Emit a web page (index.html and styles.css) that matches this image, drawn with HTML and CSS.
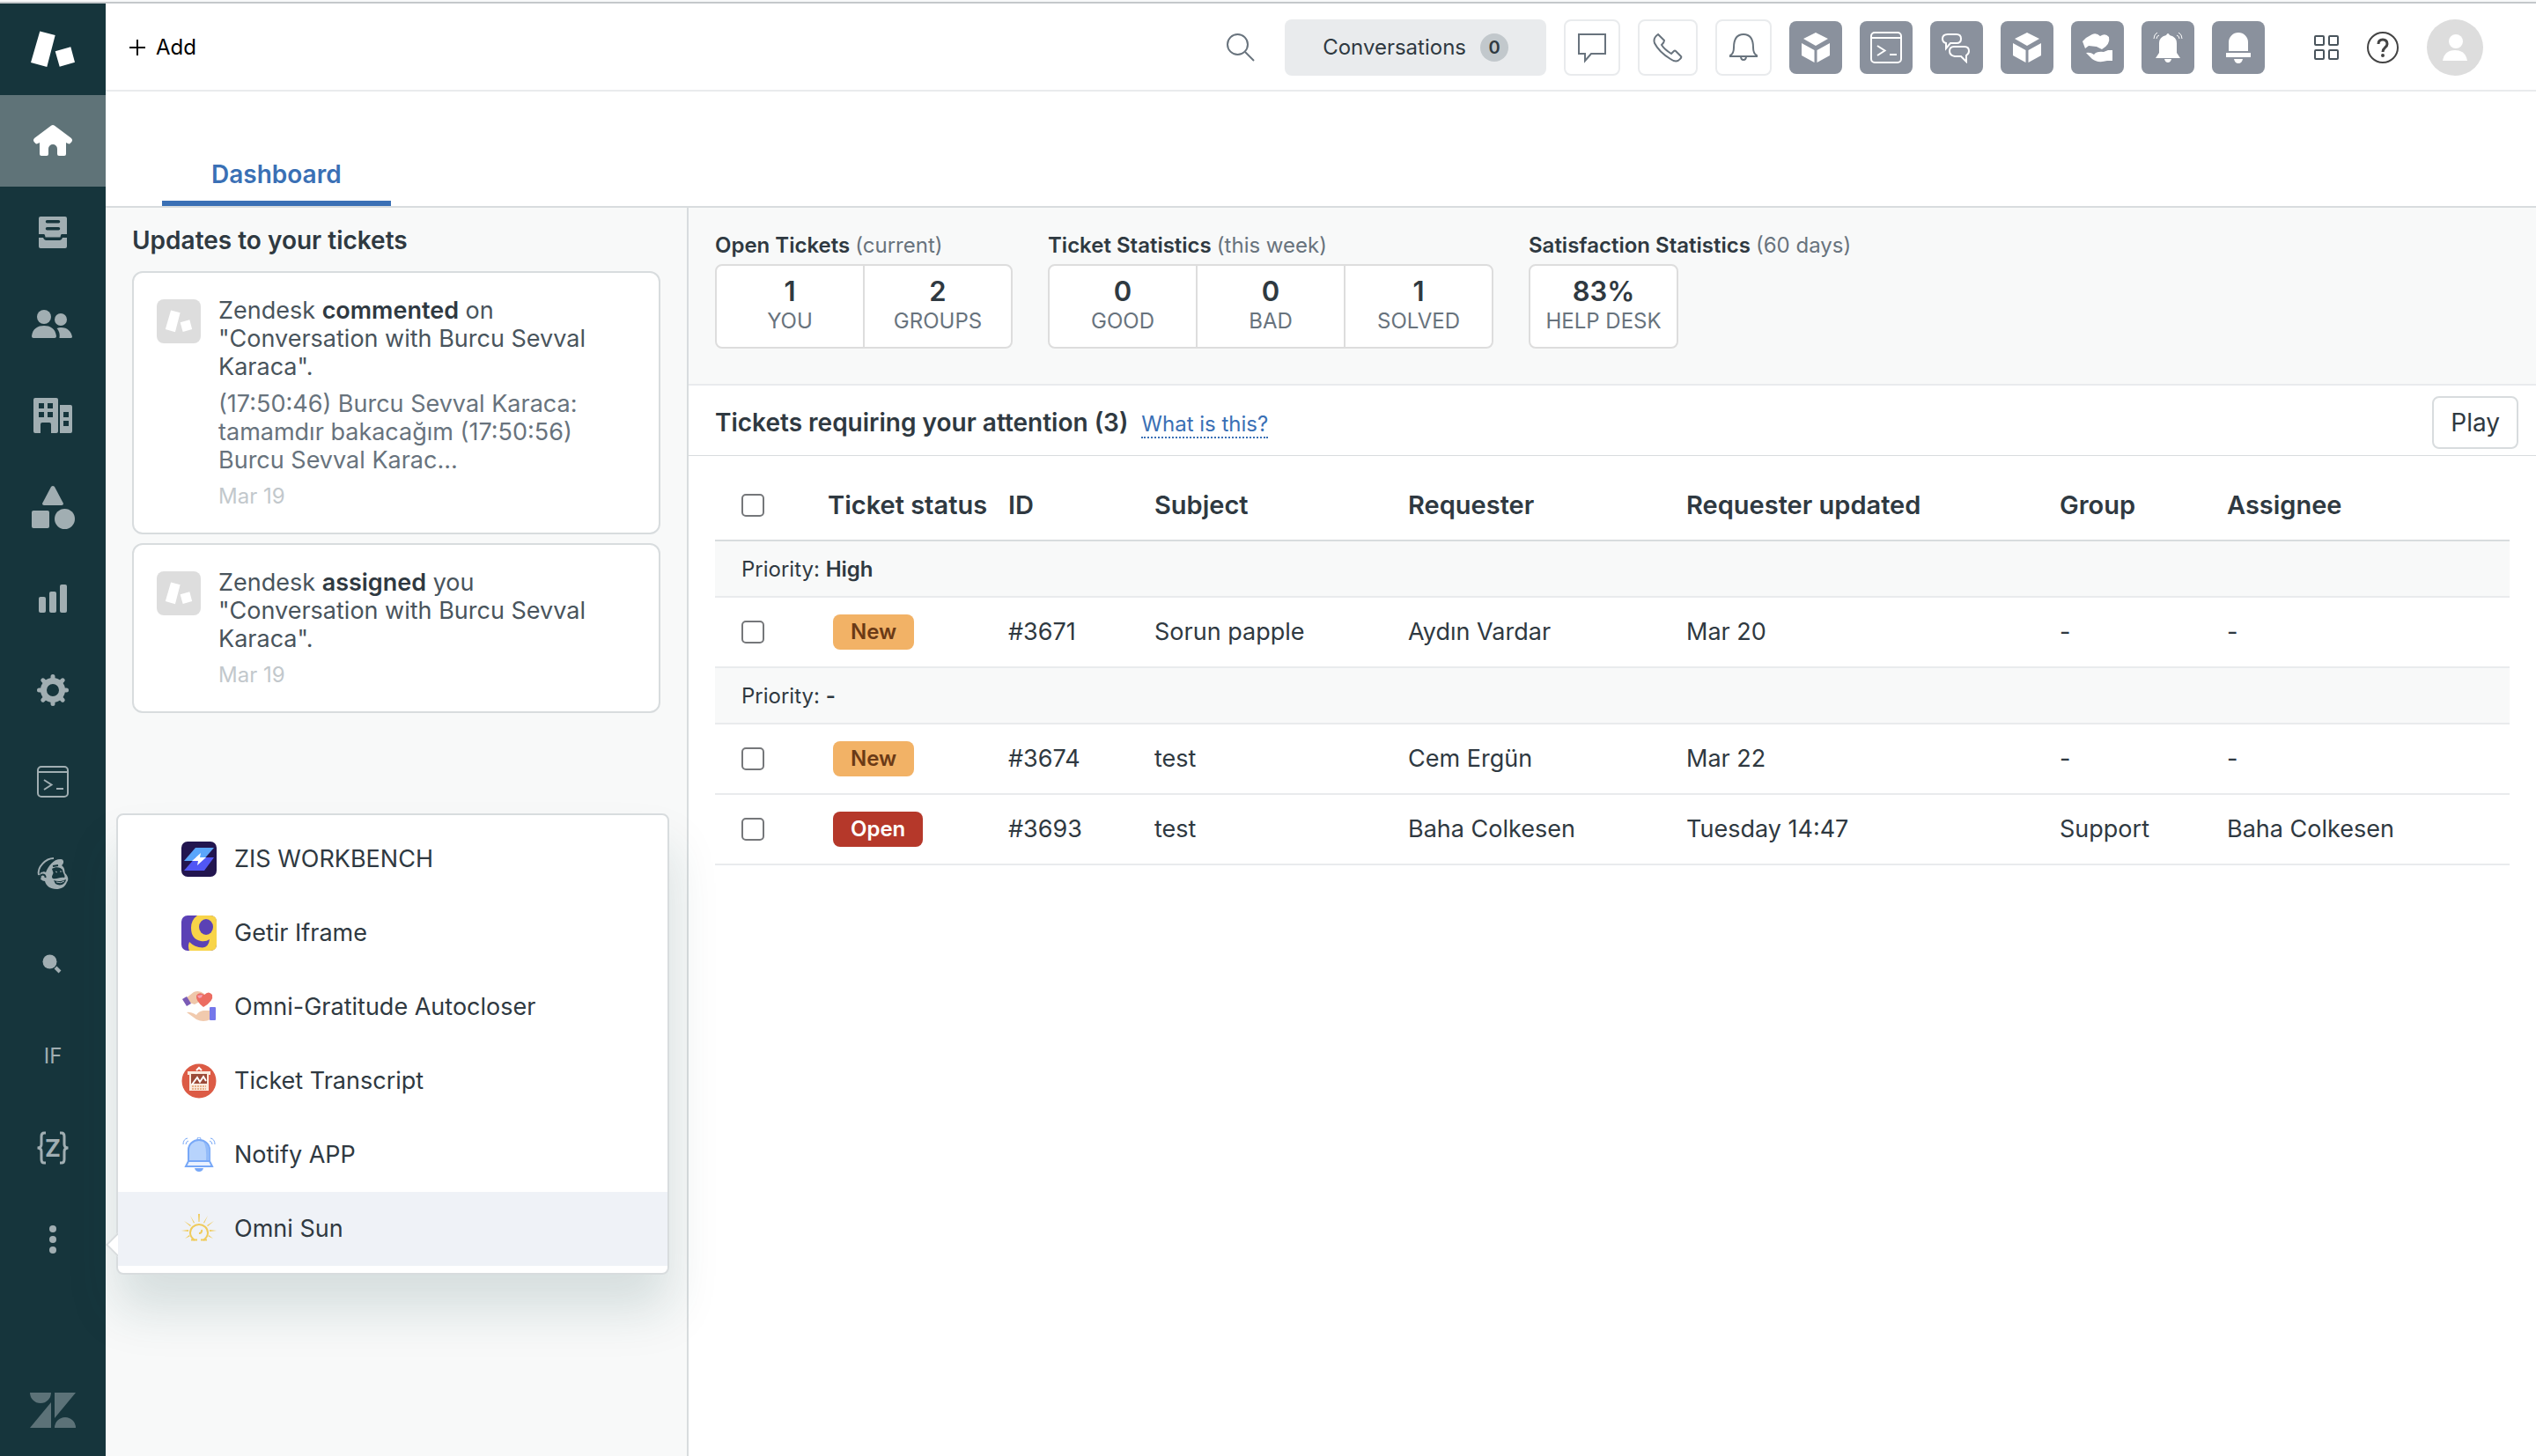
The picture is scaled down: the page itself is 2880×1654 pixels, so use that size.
FILE: index.html
```html
<!DOCTYPE html>
<html lang="en">
<head>
    <meta charset="UTF-8">
    <meta name="viewport" content="width=device-width, initial-scale=1.0">
    <title>Dashboard</title>
    <link rel="stylesheet" href="styles.css">
</head>
<body>
    <!-- shared shapes -->
    <svg class="defs" aria-hidden="true">
        <symbol id="logo" viewBox="-28 -28 56 56">
            <path d="M-14.7-20.6 2.7-16-6.7 20-25 15zM2.7 2.2 20.3-2.8 25 14.7 7.7 19.7z"/>
        </symbol>
        <symbol id="cube" viewBox="0 0 36 36">
            <path d="M18 1 32 8 18 16 4 8zM2 13 16.5 21V35L2 27zM34 13 19.5 21V35L34 27z"/>
        </symbol>
        <symbol id="terminal" viewBox="-18 -18 36 36">
            <rect x="-17" y="-17" width="34" height="34" rx="4" fill="none" stroke="currentColor" stroke-width="2"/>
            <path d="M-17-11H17M-10-2-1.500 3.500-10 9M4 8H12" fill="none" stroke="currentColor" stroke-width="2"/>
        </symbol>
    </svg>

    <div class="topline"></div>
    <div class="app">
        <nav class="sidebar">
            <ul class="nav">
                <li><a class="nav-link logo" href="#" aria-label="Support"><svg><use href="#logo"/></svg></a></li>
                <li><a class="nav-link active" href="#" aria-label="Home"><svg viewBox="-28 -28 56 56">
                    <path d="M-2-17.300Q0-18.800 2-17.300L21-3Q23-1 21.500 1L20 2.500Q19 4 17 3L15 2V15Q15 17 13 17H7Q5 17 5 15V9A5 5 0 0 0-5 9V15Q-5 17-7 17H-13Q-15 17-15 15V2L-17 3Q-19 4-20 2.500L-21.500 1Q-23-1-21-3z"/></svg></a></li>
                <li><a class="nav-link" href="#" aria-label="Views"><svg viewBox="-28 -28 56 56">
                    <path fill-rule="evenodd" d="M-14-18H14Q16-18 16-16V2H10Q9 2 8.500 5.500H-8.500Q-9 2-10 2H-16V-16Q-16-18-14-18zM-6.500-14A1.500 1.500 0 0 0-6.500-10.500H6.500A1.500 1.500 0 0 0 6.500-14zM-6.500-6A1.500 1.500 0 0 0-6.500-2.500H6.500A1.500 1.500 0 0 0 6.500-6z"/>
                    <path d="M-16 6H-11Q-10 9-8 9H8Q10 9 11 6H16V16Q16 18 14 18H-14Q-16 18-16 16z"/></svg></a></li>
                <li><a class="nav-link" href="#" aria-label="Customers"><svg viewBox="-28 -28 56 56">
                    <circle cx="-10" cy="-8" r="8"/><circle cx="9" cy="-5" r="7"/>
                    <path d="M-24 14C-23 5-17 2-10 2S3 5 4 14Q4 16 2 16H-22Q-24 16-24 14zM4.500 5Q7 4 9 4C17 4 21 9 22 14.500Q22 16 20 16H7.500Q8.500 9 4.500 5z"/></svg></a></li>
                <li><a class="nav-link" href="#" aria-label="Organizations"><svg viewBox="-28 -28 56 56">
                    <path fill-rule="evenodd" d="M-20-20H4Q6-20 6-18V18Q6 20 4 20H-2V10Q-2 8-4 8H-12Q-14 8-14 10V20H-20Q-22 20-22 18V-18Q-22-20-20-20zM-16-14V-8H-10V-14zM-6-14V-8H0V-14zM-16-4V2H-10V-4zM-6-4V2H0V-4zM8-12H20Q22-12 22-10V18Q22 20 20 20H8zM12-4V2H18V-4zM12 6V12H18V6z"/></svg></a></li>
                <li><a class="nav-link" href="#" aria-label="Objects"><svg viewBox="-28 -28 56 56">
                    <path d="M-2-23Q0-25 2-23L12-4Q12-2 10-2H-10Q-12-2-12-4z"/><rect x="-24" y="4" width="20" height="20" rx="2"/><circle cx="13.500" cy="13.500" r="11.500"/></svg></a></li>
                <li><a class="nav-link" href="#" aria-label="Reporting"><svg viewBox="-28 -28 56 56">
                    <rect x="-16" y="-2" width="8" height="18" rx="2"/><rect x="-4" y="-8" width="8" height="24" rx="2"/><rect x="8" y="-16" width="8" height="32" rx="2"/></svg></a></li>
                <li><a class="nav-link" href="#" aria-label="Admin"><svg viewBox="-28 -28 56 56">
                    <circle r="10.500" fill="none" stroke="currentColor" stroke-width="7"/>
                    <path d="M0-12V-15.500M0 12V15.500M-12 0H-15.500M12 0H15.500M8.500 8.500 11.200 11.200M-8.500 8.500-11.200 11.200M8.500-8.500 11.200-11.200M-8.500-8.500-11.200-11.200" stroke="currentColor" stroke-width="5" stroke-linecap="round"/></svg></a></li>
                <li><a class="nav-link" href="#" aria-label="Console"><svg class="icon36"><use href="#terminal"/></svg></a></li>
                <li><a class="nav-link" href="#" aria-label="Mailchimp"><svg viewBox="-28 -28 56 56">
                    <path d="M-16 2C-18-7-8-17 1-17" fill="none" stroke="currentColor" stroke-width="2"/>
                    <path d="M-8-1C-5-8 0-16 9-16 13-16 13-11 10-9 14-6 13-3 14 0 18 4 18 8 16 10 14 16 9 18 4 18-3 18-8 14-9 9-12 9-16 6-15 2-14-2-11-3-8-1z"/>
                    <path class="ink" d="M-13-1C-10-8-5-13 1-14-4-10-9-5-10-2zM-1-5C3-8 9-7 11-4 11 0 15 3 13 5 8 4 5 7 0 6-3 3 2 1 0-2zM1 8C6 10 11 9 15 7 14 13 8 15 3 12z"/>
                    <path d="M-14 6A3 3 0 1 1-8.500 5M0-8 6-9" class="ink-line"/>
                    <path d="M3-2 5-1M8-2H10M4 10Q9 12 13 9" fill="none" stroke="currentColor"/></svg></a></li>
                <li><a class="nav-link" href="#" aria-label="Search app"><svg viewBox="-28 -28 56 56">
                    <circle cx="-3.500" cy="-3.500" r="8"/><path d="M3 3 8 8" stroke="currentColor" stroke-width="4"/></svg></a></li>
                <li><a class="nav-link" href="#">IF</a></li>
                <li><a class="nav-link" href="#" aria-label="ZIS"><svg viewBox="-28 -28 56 56">
                    <path d="M-8-17H-10Q-13-17-13-13V-4Q-13 0-17.500 0-13 0-13 4V13Q-13 17-10 17H-8M8-17H10Q13-17 13-13V-4Q13 0 17.500 0 13 0 13 4V13Q13 17 10 17H8" fill="none" stroke="currentColor" stroke-width="3"/>
                    <text x="0" y="10" text-anchor="middle" class="z">Z</text></svg></a></li>
                <li class="more">
                    <button class="nav-link" type="button" aria-label="More apps" aria-expanded="true"><svg viewBox="-28 -28 56 56">
                        <circle cy="-12" r="4"/><circle r="4"/><circle cy="12" r="4"/></svg></button>
                    <ul class="menu">
                        <li><a href="#"><svg viewBox="0 0 40 40"><rect width="40" height="40" rx="7" fill="#22154f"/><path d="M16 7H37L24 22H3z" fill="#5ba6fb"/><path d="M16 18H37L26 33H3z" fill="#5157f5"/><path d="M12 22 22 13 21 18H28L18 27 19 22z" fill="#fff"/></svg>ZIS WORKBENCH</a></li>
                        <li><a href="#"><svg viewBox="0 0 40 40"><rect width="40" height="40" rx="7" fill="#5b41b5"/><path d="M18 0H33Q40 0 40 7V33Q40 40 33 40H9Q7 35 9 30 15 36 24 36.500 31 36 32 27 28 30 22 29 11 27 11 14 11 5 18 0z" fill="#f8d449"/><ellipse cx="28" cy="13" rx="8" ry="9" fill="#5b41b5"/></svg>Getir Iframe</a></li>
                        <li><a href="#"><svg viewBox="0 0 40 40"><path d="M5 10 14 3Q20 0 26 5L24 12 15 17 9 15z" fill="#efc7aa"/><path d="M1 11 6 8 11 16 6 19z" fill="#7a5bb5"/><path d="M25 20Q16 13 17 7 20 2 26 6 31 1 35 6 37 13 25 20z" fill="#ec6d62"/><path d="M18 7 24 6 23 9 20 10z" fill="#f4a0b5"/><path d="M6 26Q10 25 17 29 19 25 25 24H33V34Q25 38 17 34z" fill="#f1caae"/><rect x="32" y="20" width="7" height="15" rx="1" fill="#7577ea"/></svg>Omni-Gratitude Autocloser</a></li>
                        <li><a href="#"><svg viewBox="0 0 40 40"><circle cx="20" cy="20" r="19.500" fill="#dc5b45"/><path d="M7 9H33V13H31V31H9V13H7z" fill="#fbe9dd"/><path d="M11 12H29V23H11z" fill="#9b4a38"/><path d="M12 24 18 16 21 21 25 15 28 20M17 8 20 5 23 8" fill="none" stroke="#fff" stroke-width="2"/><path d="M12 26H28M12 29H28" stroke="#e8b189" stroke-width="2" stroke-dasharray="2 1"/></svg>Ticket Transcript</a></li>
                        <li><a href="#"><svg viewBox="0 0 40 40"><path d="M8 28V14A12 11 0 0 1 32 14V28z" fill="#b7d3fc" stroke="#78a8f7" stroke-width="2"/><path d="M25 5Q29 10 28 28H32V14Q31 8 25 5z" fill="#93bbf9"/><path d="M8 27H32L35 33H5z" fill="#eaf2ff" stroke="#78a8f7" stroke-width="2"/><path d="M15 35H25Q24 39 20 39T15 35z" fill="#78a8f7"/><path d="M18 4V2A2 2 0 0 1 22 2V4M2 8Q2 2 7 1M5 8Q5 5 8 4M38 8Q38 2 33 1M35 8Q35 5 32 4" fill="none" stroke="#78a8f7"/></svg>Notify APP</a></li>
                        <li class="current"><a href="#"><svg viewBox="0 0 40 40"><g fill="none" stroke="#efcb5c" stroke-width="2"><path d="M15 33Q10 29 10 24.500A10 9.500 0 0 1 30 24.500Q30 29 25 33"/><path d="M11 32.500H18M22 32.500H29M20 25A3 3 0 0 0 23 21"/></g><path d="M19 3H21L20.500 12H19.500zM10 5 15 13 14 13.500zM30 5 26 13.500 25 13zM3 11 11 16 10 17zM37 11 30 17 29 16zM0 22 8 21V23zM40 22 32 21V23zM4 31 9 27 9.500 28.500zM36 31 31 27 30.500 28.500z" fill="#efcb5c"/></svg>Omni Sun</a></li>
                    </ul>
                </li>
            </ul>
            <a class="nav-link brand" href="#" aria-label="Zendesk"><svg viewBox="-28 -28 56 56">
                <path d="M-26-20H-2A12 12 0 0 1-26-20zM-2-9V20H-26zM2-20H26L2 9zM2 20A12 12 0 0 1 26 20z"/></svg></a>
        </nav>

        <div class="page">
            <header class="header">
                <button class="add" type="button"><svg viewBox="0 0 18 18"><path d="M9 0V18M0 9H18" stroke="currentColor" stroke-width="2"/></svg>Add</button>
                <div class="tools">
                    <button class="plain search" type="button" aria-label="Search"><svg viewBox="0 0 32 32"><circle cx="12.500" cy="12.500" r="11.500"/><path d="M21 21 31 31"/></svg></button>
                    <button class="conversations" type="button">Conversations <span class="count">0</span></button>
                    <button class="outlined" type="button" aria-label="Chat"><svg viewBox="0 0 36 36"><path d="M3 3H33V25H17L10 33V25H3z"/></svg></button>
                    <button class="outlined talk" type="button" aria-label="Talk"><svg viewBox="0 0 36 36"><path d="M7 3 14 10Q14 12 11 15 14 20 22 25L25 22Q26 21 27 22L33 28Q34 29 32 31 28 36 21 31 8 23 3 13 1 7 7 3z"/></svg></button>
                    <button class="outlined" type="button" aria-label="Notifications"><svg viewBox="0 0 36 36"><path d="M3 27Q7 25 7 18 7 3 18 3T29 18Q29 25 33 27V28H3zM15 28Q15 32 18 32T21 28"/></svg></button>
                    <button class="app-btn" type="button" aria-label="App"><svg><use href="#cube"/></svg></button>
                    <button class="app-btn" type="button" aria-label="Console"><svg><use href="#terminal"/></svg></button>
                    <button class="app-btn" type="button" aria-label="Messages"><svg viewBox="0 0 36 36"><path d="M8 3H18Q23 3 23 8 23 13 18 13H11L6 19V13Q2 12 2 8 2 3 8 3zM15 17H27Q32 17 32 22 32 25 29 27V34L23 28H16Q10 27 10 22 10 17 15 17z" fill="none" stroke="currentColor" stroke-width="2"/></svg></button>
                    <button class="app-btn" type="button" aria-label="App"><svg><use href="#cube"/></svg></button>
                    <button class="app-btn" type="button" aria-label="Omni-Gratitude Autocloser"><svg viewBox="0 0 36 36"><path d="M1 11 5 7 12 3Q17 1 21 5 27 1 31 6 33 14 23 20L17 17 8 16 4 19zM5 24Q10 23 14 26 17 22 25 23L30 21H35V33H29Q18 36 12 31z"/></svg></button>
                    <button class="app-btn" type="button" aria-label="Notify APP"><svg viewBox="0 0 36 36"><path d="M8 24V13Q8 6 16 4 18 0 20 4 28 6 28 13V24L32 30H4zM14 31H22Q21 35 18 35T14 31z"/><path d="M2 8Q2 3 6 1M5 8Q5 5 8 4M34 8Q34 3 30 1M31 8Q31 5 28 4" fill="none" stroke="currentColor"/></svg></button>
                    <button class="app-btn" type="button" aria-label="Alerts"><svg viewBox="0 0 36 36"><path d="M7 22V12A11 11 0 0 1 29 12V22zM4 24H32V29H4zM13 31H23Q22 36 18 36T13 31z"/></svg></button>
                    <button class="plain grid" type="button" aria-label="Products"><svg viewBox="0 0 28 28"><rect x="1" y="1" width="10" height="10" rx="1"/><rect x="17" y="1" width="10" height="10" rx="1"/><rect x="1" y="17" width="10" height="10" rx="1"/><rect x="17" y="17" width="10" height="10" rx="1"/></svg></button>
                    <button class="plain help" type="button" aria-label="Help"><svg viewBox="0 0 36 36"><circle cx="18" cy="18" r="17"/><path d="M13 14Q13 9 18 9T23 14C23 18 18 18 18 23" stroke-width="3"/><circle cx="18" cy="27" r="1"/></svg></button>
                    <button class="plain avatar" type="button" aria-label="Profile"><svg viewBox="0 0 64 64"><circle cx="33" cy="25" r="8"/><path d="M18 47Q20 35 32 35T46 47z"/></svg></button>
                </div>
            </header>

            <div class="tabs">
                <a class="tab" href="#">Dashboard</a>
            </div>

            <div class="content">
                <aside class="updates">
                    <h2>Updates to your tickets</h2>
                    <article class="card">
                        <svg class="card-logo"><use href="#logo"/></svg>
                        <div class="card-text">
                            <p>Zendesk <b>commented</b> on "Conversation with Burcu Sevval Karaca".</p>
                            <p class="comment">(17:50:46) Burcu Sevval Karaca: tamamdır bakacağım (17:50:56) Burcu Sevval Karac...</p>
                            <time>Mar 19</time>
                        </div>
                    </article>
                    <article class="card">
                        <svg class="card-logo"><use href="#logo"/></svg>
                        <div class="card-text">
                            <p>Zendesk <b>assigned</b> you "Conversation with Burcu Sevval Karaca".</p>
                            <time>Mar 19</time>
                        </div>
                    </article>
                </aside>

                <main class="main">
                    <section class="stats">
                        <div class="stat-group">
                            <h3>Open Tickets <span>(current)</span></h3>
                            <div class="boxes">
                                <div class="box"><strong>1</strong><span>YOU</span></div>
                                <div class="box"><strong>2</strong><span>GROUPS</span></div>
                            </div>
                        </div>
                        <div class="stat-group">
                            <h3>Ticket Statistics <span>(this week)</span></h3>
                            <div class="boxes">
                                <div class="box"><strong>0</strong><span>GOOD</span></div>
                                <div class="box"><strong>0</strong><span>BAD</span></div>
                                <div class="box"><strong>1</strong><span>SOLVED</span></div>
                            </div>
                        </div>
                        <div class="stat-group">
                            <h3>Satisfaction Statistics <span>(60 days)</span></h3>
                            <div class="boxes">
                                <div class="box"><strong>83%</strong><span>HELP DESK</span></div>
                            </div>
                        </div>
                    </section>

                    <div class="list-head">
                        <h2>Tickets requiring your attention (3)</h2>
                        <a href="#">What is this?</a>
                        <button class="play" type="button">Play</button>
                    </div>

                    <div class="table-wrap">
                        <table>
                            <colgroup>
                                <col class="c-check"><col class="c-status"><col class="c-id"><col class="c-subject">
                                <col class="c-requester"><col class="c-updated"><col class="c-group"><col>
                            </colgroup>
                            <thead>
                                <tr>
                                    <th><input type="checkbox" aria-label="Select all tickets"></th>
                                    <th>Ticket status</th>
                                    <th>ID</th>
                                    <th>Subject</th>
                                    <th>Requester</th>
                                    <th>Requester updated</th>
                                    <th>Group</th>
                                    <th>Assignee</th>
                                </tr>
                            </thead>
                            <tbody>
                                <tr class="priority"><td colspan="8">Priority: <b>High</b></td></tr>
                                <tr>
                                    <td><input type="checkbox" aria-label="Select #3671"></td>
                                    <td><span class="badge new">New</span></td>
                                    <td>#3671</td>
                                    <td>Sorun papple</td>
                                    <td>Aydın Vardar</td>
                                    <td>Mar 20</td>
                                    <td>-</td>
                                    <td>-</td>
                                </tr>
                                <tr class="priority"><td colspan="8">Priority: <b>-</b></td></tr>
                                <tr>
                                    <td><input type="checkbox" aria-label="Select #3674"></td>
                                    <td><span class="badge new">New</span></td>
                                    <td>#3674</td>
                                    <td>test</td>
                                    <td>Cem Ergün</td>
                                    <td>Mar 22</td>
                                    <td>-</td>
                                    <td>-</td>
                                </tr>
                                <tr>
                                    <td><input type="checkbox" aria-label="Select #3693"></td>
                                    <td><span class="badge open">Open</span></td>
                                    <td>#3693</td>
                                    <td>test</td>
                                    <td>Baha Colkesen</td>
                                    <td>Tuesday 14:47</td>
                                    <td>Support</td>
                                    <td>Baha Colkesen</td>
                                </tr>
                            </tbody>
                        </table>
                    </div>
                </main>
            </div>
        </div>
    </div>
</body>
</html>
```
FILE: styles.css
```css
* {
    box-sizing: border-box;
}
body {
    margin: 0;
    min-height: 100vh;
    display: flex;
    flex-direction: column;
    font-family: Inter, "Noto Sans", sans-serif;
    font-size: 27px;
    line-height: 32px;
    color: #2f3941;
    background: #fff;
}
h2, h3, p, ul {
    margin: 0;
    padding: 0;
}
ul {
    list-style: none;
}
b {
    font-weight: 600;
}
a {
    text-decoration: none;
}
button {
    font: inherit;
    color: inherit;
    background: none;
    border: none;
    padding: 0;
    cursor: pointer;
}
svg {
    display: block;
    fill: currentColor;
}
.defs {
    display: none;
}
.topline {
    height: 4px;
    background: #f8f9fa;
    border-bottom: 2px solid #c4c8cb;
}
.app {
    flex: 1;
    display: flex;
}

/* sidebar */
.sidebar {
    position: relative;
    z-index: 2;
    width: 120px;
    flex: none;
    display: flex;
    flex-direction: column;
    background: #16353c;
}
.nav-link {
    width: 100%;
    height: 104px;
    display: flex;
    align-items: center;
    justify-content: center;
    font-size: 24px;
    color: #a1aeb2;
}
.nav-link svg {
    width: 56px;
    height: 56px;
}
.nav-link .icon36 {
    width: 36px;
    height: 36px;
}
.nav-link.logo {
    color: #fff;
}
.nav-link.active {
    background: #5f7378;
    color: #fff;
}
.nav-link .ink {
    fill: #16353c;
}
.nav-link .ink-line {
    fill: none;
    stroke: #16353c;
    stroke-width: 2;
}
.z {
    font-size: 27px;
    font-weight: 700;
}
.brand {
    margin-top: auto;
    height: 104px;
    color: #5c7278;
}
.more {
    position: relative;
}
.menu {
    position: absolute;
    left: 132px;
    bottom: 12px;
    width: 628px;
    padding: 8px 0;
    background: #fff;
    border: 2px solid #d8dcde;
    border-radius: 8px;
    box-shadow: 0 40px 56px rgba(23, 73, 77, 0.15);
}
.menu::before {
    content: "";
    position: absolute;
    left: -10px;
    bottom: 22px;
    width: 18px;
    height: 18px;
    background: #fff;
    border-left: 2px solid #d8dcde;
    border-bottom: 2px solid #d8dcde;
    transform: rotate(45deg);
}
.menu li {
    position: relative;
}
.menu a {
    display: flex;
    align-items: center;
    gap: 20px;
    height: 84px;
    padding-left: 72px;
    color: #2f3941;
}
.menu svg {
    width: 40px;
    height: 40px;
}
.menu .current {
    background: #eff2f7;
}

/* header */
.page {
    flex: 1;
    min-width: 0;
    display: flex;
    flex-direction: column;
}
.header {
    height: 100px;
    display: flex;
    align-items: center;
    justify-content: space-between;
    padding: 2px 60px 0 27px;
    border-bottom: 2px solid #e9ebed;
}
.add {
    display: flex;
    align-items: center;
    gap: 12px;
    font-size: 24px;
    color: #000;
}
.add svg {
    width: 18px;
    height: 18px;
}
.tools {
    display: flex;
    align-items: center;
    gap: 20px;
}
.plain svg {
    fill: none;
    stroke: #68737d;
    stroke-width: 2;
}
.search {
    margin-right: 14px;
}
.search svg {
    width: 32px;
    height: 32px;
}
.conversations {
    display: flex;
    align-items: center;
    gap: 16px;
    height: 64px;
    padding: 0 43px;
    border-radius: 8px;
    background: #e9ebed;
    font-size: 24px;
}
.count {
    width: 32px;
    height: 32px;
    border-radius: 50%;
    background: #c2c8cc;
    font-size: 20px;
    font-weight: 600;
    text-align: center;
}
.outlined {
    display: flex;
    align-items: center;
    justify-content: center;
    width: 64px;
    height: 64px;
    border: 2px solid #e9ebed;
    border-radius: 8px;
}
.talk {
    width: 68px;
}
.outlined svg {
    width: 36px;
    height: 36px;
    fill: none;
    stroke: #68737d;
    stroke-width: 2;
}
.app-btn {
    display: flex;
    align-items: center;
    justify-content: center;
    width: 60px;
    height: 60px;
    border-radius: 8px;
    background: #8a919d;
    color: #fff;
}
.app-btn svg {
    width: 36px;
    height: 36px;
}
.grid {
    margin-left: 36px;
}
.grid svg {
    width: 28px;
    height: 28px;
    stroke: #49545c;
}
.help {
    margin: 0 12px;
}
.help svg {
    width: 36px;
    height: 36px;
    stroke: #444;
}
.avatar {
    border-radius: 50%;
    background: #ddd;
}
.avatar svg {
    width: 64px;
    height: 64px;
    fill: #fff;
    stroke: none;
}

/* tabs */
.tabs {
    height: 132px;
    display: flex;
    align-items: flex-end;
    padding-left: 64px;
    border-bottom: 2px solid #d8dcde;
}
.tab {
    padding: 0 56px 10px;
    border-bottom: 6px solid #3a70b5;
    font-size: 28px;
    font-weight: 600;
    line-height: 40px;
    color: #3a70b5;
}
.content {
    flex: 1;
    display: flex;
}

/* updates */
.updates {
    width: 662px;
    flex: none;
    padding: 17px 30px;
    background: #f8f9f9;
    border-right: 2px solid #d8dcde;
}
.updates h2 {
    margin-bottom: 15px;
    font-size: 28px;
    font-weight: 600;
    line-height: 40px;
}
.card {
    display: flex;
    gap: 20px;
    margin-bottom: 10px;
    padding: 27px 40px 25px 26px;
    background: #fff;
    border: 2px solid #d8dcde;
    border-radius: 12px;
    color: #49545c;
}
.card b {
    color: #2f3941;
}
.card-logo {
    width: 50px;
    height: 50px;
    flex: none;
    margin-top: 3px;
    padding: 8px;
    border-radius: 8px;
    background: #ddd;
    color: #fff;
}
.comment {
    margin-top: 10px;
    color: #68737d;
}
.card time {
    display: block;
    margin-top: 9px;
    font-size: 24px;
    color: #c2c8cc;
}

/* stats */
.main {
    flex: 1;
    min-width: 0;
}
.stats {
    display: flex;
    gap: 40px;
    padding: 27px 30px 40px;
    background: #f8f9f9;
    border-bottom: 2px solid #e9ebed;
}
.stat-group {
    display: flex;
    flex-direction: column;
    align-items: flex-start;
    gap: 5px;
}
.stat-group h3 {
    font-size: 24px;
    font-weight: 600;
}
.stat-group h3 span {
    font-weight: 400;
    color: #68737d;
}
.boxes {
    display: flex;
    background: #fff;
    border: 2px solid #ddd;
    border-radius: 8px;
}
.box {
    width: 166px;
    padding: 8px 0 16px;
    display: flex;
    flex-direction: column;
    align-items: center;
}
.box + .box {
    width: 168px;
    border-left: 2px solid #ddd;
}
.box strong {
    font-size: 31px;
    font-weight: 600;
    line-height: 42px;
}
.box span {
    font-size: 24px;
    line-height: 26px;
    color: #68737d;
}

/* ticket list */
.list-head {
    display: flex;
    align-items: baseline;
    gap: 15px;
    padding: 12px 20px 7px 30px;
    border-bottom: 1px solid #d8dcde;
}
.list-head h2 {
    font-size: 28px;
    font-weight: 600;
}
.list-head a {
    font-size: 24px;
    line-height: 28px;
    color: #3a70b5;
    border-bottom: 2px dotted #3a70b5;
}
.play {
    margin-left: auto;
    height: 60px;
    padding: 0 19px;
    border: 2px solid #d8dcde;
    border-radius: 8px;
    font-size: 28px;
}
.table-wrap {
    padding: 0 30px;
}
table {
    width: 100%;
    table-layout: fixed;
    border-spacing: 0;
}
.c-check { width: 128px; }
.c-status { width: 205px; }
.c-id { width: 166px; }
.c-subject { width: 288px; }
.c-requester { width: 316px; }
.c-updated { width: 424px; }
.c-group { width: 190px; }
th {
    height: 97px;
    padding: 17px 0 0;
    border-bottom: 2px solid #d8dcde;
    font-size: 29px;
    font-weight: 600;
    text-align: left;
    white-space: nowrap;
}
td {
    height: 80px;
    padding: 0;
    border-bottom: 2px solid #e9ebed;
}
.priority td {
    height: 64px;
    padding: 2px 0 0 30px;
    background: #f8f9f9;
    font-size: 24px;
}
input[type="checkbox"] {
    appearance: none;
    display: block;
    width: 26px;
    height: 26px;
    margin: 0 0 0 30px;
    border: 2px solid #75777a;
    border-radius: 5px;
    background: #fff;
}
.badge {
    display: inline-block;
    margin-left: 6px;
    padding: 0 20px;
    border-radius: 8px;
    font-size: 24px;
    font-weight: 600;
    line-height: 40px;
    vertical-align: middle;
}
.new {
    background: #f2b266;
    color: #6b3a16;
}
.open {
    background: #b5382a;
    color: #fff;
}
```
